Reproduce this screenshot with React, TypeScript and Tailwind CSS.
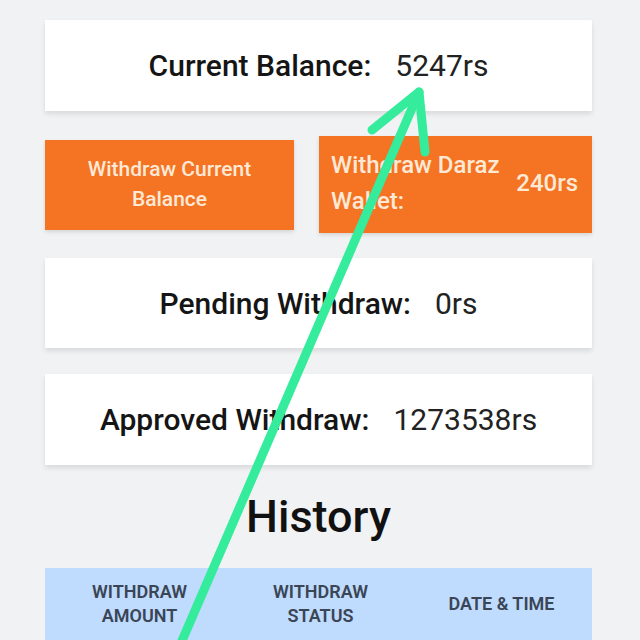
import React from "react";

export default function App() {
  return (
    <div
      className="relative w-[640px] h-[640px] overflow-hidden bg-[#f1f2f4]"
      style={{ fontFamily: "Roboto, 'Noto Sans', sans-serif" }}
    >
      <div className="flex flex-col pl-[45px] pr-[48px] pt-[20px]">
        <div className="h-[91px] bg-white shadow-[0_3px_5px_rgba(0,0,0,0.10)] flex items-center justify-center gap-[24px] text-[30px]">
          <span className="font-medium text-[#151515]">Current Balance:</span>
          <span className="text-[#222]">5247rs</span>
        </div>

        <div className="mt-[25px] h-[97px] flex items-center gap-[25px]">
          <div className="w-[249px] h-[90px] bg-[#f47424] shadow-[0_2px_4px_rgba(0,0,0,0.12)] flex items-center justify-center text-center text-[21px] leading-[30px] font-medium text-[#fde9d6] pb-[2px]">
            <span>
              Withdraw Current
              <br />
              Balance
            </span>
          </div>
          <div className="flex-1 h-[97px] bg-[#f47424] shadow-[0_2px_4px_rgba(0,0,0,0.12)] flex items-center justify-between pl-[12px] pr-[14px] pb-[3px] text-[24px] font-medium text-[#fde9d6]">
            <span className="leading-[36px]">
              Withdraw Daraz
              <br />
              Wallet:
            </span>
            <span>240rs</span>
          </div>
        </div>

        <div className="mt-[25px] h-[90px] bg-white shadow-[0_3px_5px_rgba(0,0,0,0.10)] flex items-center justify-center gap-[24px] text-[30px]">
          <span className="font-medium text-[#151515]">Pending Withdraw:</span>
          <span className="text-[#222]">0rs</span>
        </div>

        <div className="mt-[26px] h-[91px] bg-white shadow-[0_3px_5px_rgba(0,0,0,0.10)] flex items-center justify-center gap-[24px] text-[30px]">
          <span className="font-medium text-[#151515]">Approved Withdraw:</span>
          <span className="text-[#222]">1273538rs</span>
        </div>

        <h2 className="h-[103px] flex items-center justify-center text-[45px] font-medium text-[#111]">
          History
        </h2>

        <div className="h-[100px] bg-[#bfdbfd] grid grid-cols-3 items-start pt-[12px] pl-[4px] text-[18px] leading-[24px] font-semibold text-[#3a4556] text-center uppercase">
          <span>
            Withdraw
            <br />
            Amount
          </span>
          <span>
            Withdraw
            <br />
            Status
          </span>
          <span className="pt-[12px]">Date &amp; Time</span>
        </div>
      </div>

      <svg
        className="absolute inset-0 pointer-events-none"
        width="640"
        height="640"
        viewBox="0 0 640 640"
      >
        <g
          stroke="#35ec9c"
          strokeWidth="9"
          strokeLinecap="round"
          strokeLinejoin="round"
          fill="none"
        >
          <path d="M178 650 L419 92" />
          <path d="M372 130 L419 92 L425 152" />
        </g>
      </svg>
    </div>
  );
}
